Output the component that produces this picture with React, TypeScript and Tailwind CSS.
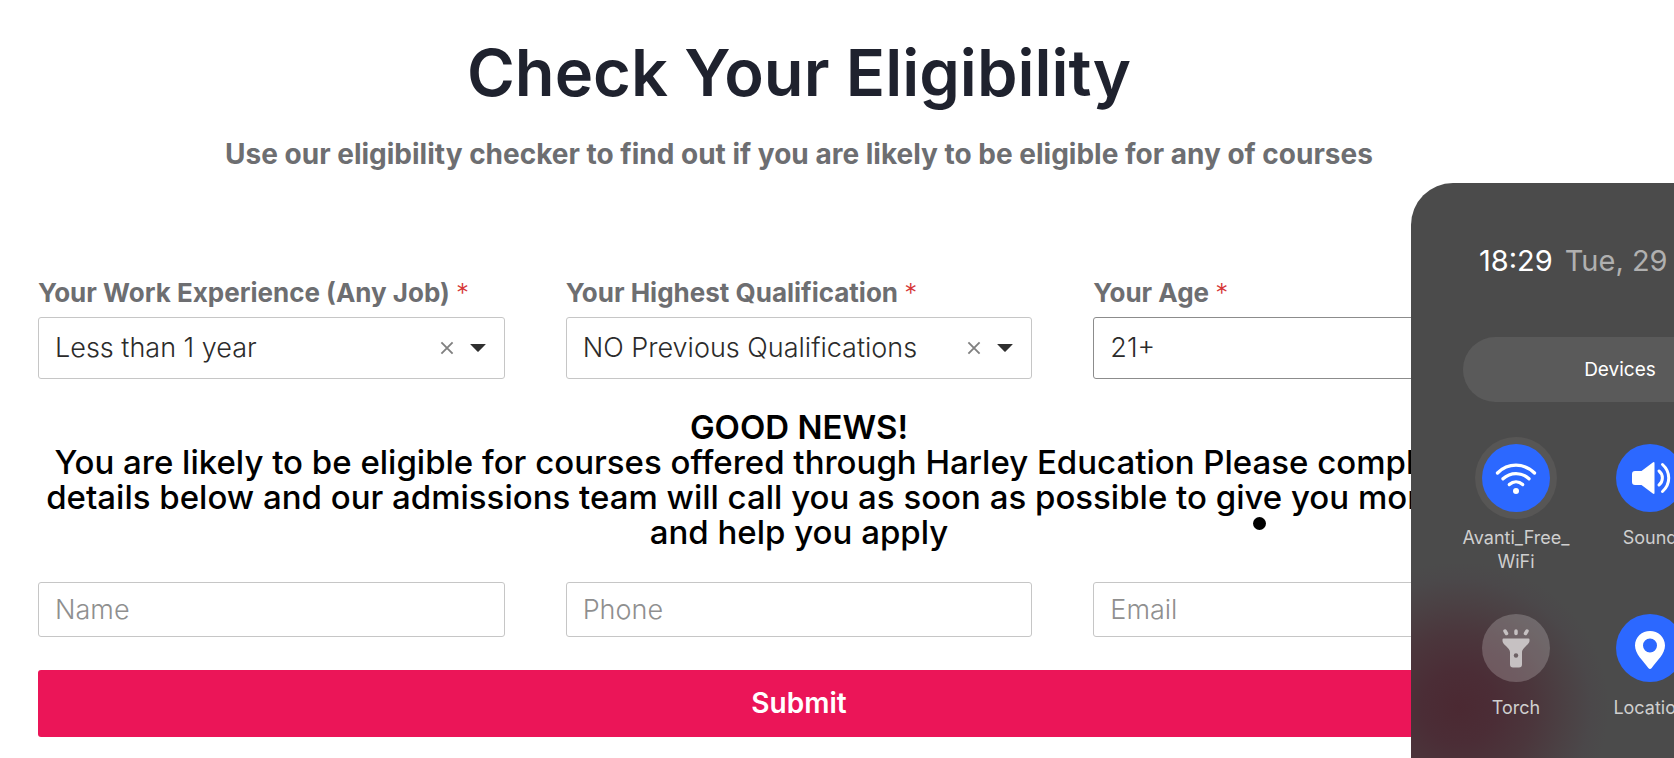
import type { ReactNode } from "react";

const selects = [
  { id: "experience", label: "Your Work Experience (Any Job)", value: "Less than 1 year", border: "border-[#c6c6c6]" },
  { id: "qualification", label: "Your Highest Qualification", value: "NO Previous Qualifications", border: "border-[#c6c6c6]" },
  { id: "age", label: "Your Age", value: "21+", border: "border-[#8c8c8c]" },
];

const inputs = [
  { id: "name", label: "Name", type: "text" },
  { id: "phone", label: "Phone", type: "tel" },
  { id: "email", label: "Email", type: "email" },
];

function SelectField({ id, label, value, border }: (typeof selects)[number]) {
  return (
    <div className="min-w-0">
      <label htmlFor={id} className="block text-[26px] leading-8 font-bold whitespace-nowrap text-[#6d6e71]">
        {label} <span className="font-light text-[#d63637]">*</span>
      </label>
      <div className={`mt-2 flex h-[62px] items-center rounded-[3px] border bg-white pr-[18px] pl-4 ${border}`}>
        <select
          id={id}
          defaultValue={value}
          className="min-w-0 flex-1 appearance-none bg-transparent text-[27px] leading-9 font-light text-[#2b2b2b] outline-none"
        >
          <option>{value}</option>
        </select>
        <button type="button" aria-label={`Clear ${label}`} className="mr-4">
          <svg width="14" height="14" viewBox="0 0 15 15" stroke="#808080" strokeWidth="2" fill="none">
            <path d="M1.5 1.5l12 12M13.5 1.5l-12 12" />
          </svg>
        </button>
        <svg width="16" height="8" viewBox="0 0 16 8" fill="#2f2f2f" aria-hidden="true">
          <path d="M0.6 0h14.8q.5 0 .1.5L8.6 7.6q-.6.5-1.2 0L.5.5Q.1 0 .6 0z" />
        </svg>
      </div>
    </div>
  );
}

function WifiIcon() {
  return (
    <svg width="42" height="34" viewBox="0 0 42 34" fill="none" stroke="white" strokeWidth="3.3" strokeLinecap="round">
      <path d="M2.5 12C13 1.600 29 1.600 39.500 12" />
      <path d="M8 17.8c7.500-7 18.500-7 26 0" />
      <path d="M14.300 23.600c4-3.600 9.400-3.600 13.400 0" />
      <circle cx="21" cy="30" r="3" fill="white" stroke="none" />
    </svg>
  );
}

function SoundIcon() {
  return (
    <svg width="40" height="34" viewBox="0 0 40 34" fill="white" className="ml-0.5">
      <path d="M4 10h6.5L21.8 1.400q1.700-1.200 1.700.8v29.600q0 2-1.700.8L10.500 24H4q-3 0-3-3v-8q0-3 3-3z" />
      <g fill="none" stroke="white" strokeWidth="3" strokeLinecap="round">
        <path d="M28 10c4.500 3.500 4.500 10.500 0 14" />
        <path d="M31.500 3.500c8.300 7.500 8.300 19.500 0 27" />
      </g>
    </svg>
  );
}

function TorchIcon() {
  return (
    <svg width="28" height="40" viewBox="0 0 28 40" fill="#c6c1c2">
      <path d="M1.500 10.500h25q1 0 1 1v1.500c0 3.500-7.500 7-7.500 11v12.500q0 3-3 3h-6q-3 0-3-3V24c0-4-7.500-7.500-7.500-11v-1.500q0-1 1-1z" />
      <circle cx="14" cy="27.500" r="2.200" fill="#6d6164" />
      <g stroke="#c6c1c2" strokeWidth="3.500" strokeLinecap="round">
        <path d="M3 3l1.500 2.500M14 3v2.500M25 3l-1.500 2.500" />
      </g>
    </svg>
  );
}

function LocationIcon() {
  return (
    <svg width="30" height="40" viewBox="0 0 30 40" className="mt-1">
      <path
        fill="white"
        fillRule="evenodd"
        d="M15 1C7 1 0 7 0 15.500c0 8.500 8 15 13.300 22.500q1.700 2.200 3.400 0C22 30.500 30 24 30 15.500 30 7 23 1 15 1zm0 7.500a7 7 0 1 1 0 14 7 7 0 0 1 0-14z"
      />
    </svg>
  );
}

function Tile({ label, face, ring, children }: { label: ReactNode; face: string; ring?: boolean; children: ReactNode }) {
  return (
    <button type="button" className="flex flex-col items-center gap-[7px] text-lg leading-6 text-[#cfcfcf]">
      <span className={`rounded-full p-[7px] ${ring ? "bg-[#575655]" : ""}`}>
        <span className={`flex size-[68px] items-center justify-center rounded-full ${face}`}>{children}</span>
      </span>
      <span>{label}</span>
    </button>
  );
}

function QuickSettings() {
  return (
    <aside className="absolute top-[183px] right-0 bottom-0 w-[263px] overflow-hidden rounded-tl-[42px] bg-[#4b4b4b] bg-[radial-gradient(ellipse_150px_145px_at_48px_524px,#4b2932_0%,#4b2d36_25%,#4b363c_50%,#4b4144_72%,#4b484a_88%,#4b4b4b_100%)] pt-[60px] pl-[38px]">
      <p className="ml-[30px] flex gap-3 text-[29px] leading-9 whitespace-nowrap">
        <span className="text-white">18:29</span>
        <span className="text-[#b0b0b0]">Tue, 29</span>
      </p>
      <button type="button" className="mt-[58px] ml-[14px] block h-[65px] w-[314px] rounded-full bg-[#5a5a5a] pt-0.5 text-[19px] text-white">
        Devices
      </button>
      <div className="mt-[35px] grid grid-cols-[134px_134px] items-start gap-y-[33px]">
        <Tile label={<>Avanti_Free_<br />WiFi</>} face="bg-[#2c68ff]" ring>
          <WifiIcon />
        </Tile>
        <Tile label="Sound" face="bg-[#2c68ff]">
          <SoundIcon />
        </Tile>
        <Tile label="Torch" face="bg-white/20">
          <TorchIcon />
        </Tile>
        <Tile label="Location" face="bg-[#2c68ff]">
          <LocationIcon />
        </Tile>
      </div>
    </aside>
  );
}

export default function App() {
  return (
    <div className="relative min-h-screen overflow-hidden bg-white font-['Inter',sans-serif]">
      <main className="pt-[39px] pr-[114px] pb-5 pl-[38px]">
        <h1 className="text-center text-[65px] leading-[68px] font-semibold text-[#1f222e]">Check Your Eligibility</h1>
        <p className="mt-[29px] text-center text-[28px] leading-9 font-bold text-[#6d6e71]">
          Use our eligibility checker to find out if you are likely to be eligible for any of courses
        </p>
        <form className="mt-[105px]" onSubmit={(e) => e.preventDefault()}>
          <div className="grid grid-cols-3 gap-[61px]">
            {selects.map((s) => (
              <SelectField key={s.id} {...s} />
            ))}
          </div>
          <div className="mt-[31px] text-center text-[33px] leading-[35px] font-medium whitespace-nowrap text-black">
            <p className="font-semibold">GOOD NEWS!</p>
            <p>
              You are likely to be eligible for courses offered through Harley Education Please complete your
              <br />
              details below and our admissions team will call you as soon as possible to give you more details
              <br />
              and help you apply
            </p>
          </div>
          <div className="mt-8 grid grid-cols-3 gap-[61px]">
            {inputs.map((f) => (
              <input
                key={f.id}
                id={f.id}
                type={f.type}
                aria-label={f.label}
                placeholder={f.label}
                className="h-[55px] min-w-0 rounded-[3px] border border-[#c6c6c6] px-4 text-[27px] font-light text-[#2b2b2b] outline-none placeholder:text-[#8f8f8f]"
              />
            ))}
          </div>
          <button type="submit" className="mt-[33px] h-[67px] w-full rounded-[3px] bg-[#eb1558] pb-0.5 text-[28px] font-semibold text-white">
            Submit
          </button>
        </form>
      </main>
      <span className="absolute top-[517px] left-[1253px] size-[13px] rounded-full bg-black" />
      <QuickSettings />
    </div>
  );
}
